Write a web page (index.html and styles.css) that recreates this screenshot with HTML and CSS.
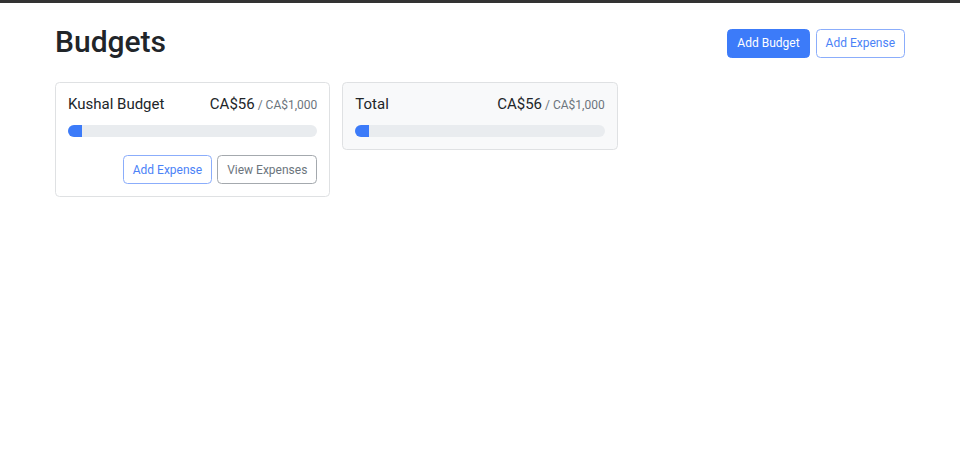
FILE: index.html
```html
<!DOCTYPE html>
<html lang="en">
<head>
<meta charset="utf-8">
<title>Budgets</title>
<link rel="stylesheet" href="styles.css">
</head>
<body>
<div class="topbar"></div>
<main class="container">
  <header class="header">
    <h1 class="title">Budgets</h1>
    <button class="btn btn-primary">Add Budget</button>
    <button class="btn btn-outline-primary">Add Expense</button>
  </header>
  <section class="grid">
    <div class="card">
      <div class="card-title">
        <div class="name">Kushal Budget</div>
        <div class="amount">CA$56<span class="max">/ CA$1,000</span></div>
      </div>
      <div class="progress"><div class="progress-bar" style="width:5.6%"></div></div>
      <div class="actions">
        <button class="btn btn-outline-primary">Add Expense</button>
        <button class="btn btn-outline-secondary">View Expenses</button>
      </div>
    </div>
    <div class="card card-light">
      <div class="card-title">
        <div class="name">Total</div>
        <div class="amount">CA$56<span class="max">/ CA$1,000</span></div>
      </div>
      <div class="progress"><div class="progress-bar" style="width:5.6%"></div></div>
    </div>
  </section>
</main>
</body>
</html>
```
FILE: styles.css
```css
* { box-sizing: border-box; }
html, body { margin: 0; padding: 0; background: #fff; }
body {
  font-family: Roboto, "Noto Sans", sans-serif;
  color: #212529;
  font-size: 12px;
  line-height: 1.5;
}
.topbar { height: 3px; background: #333; }
.container { padding: 19px 55px 0; }
.header {
  display: flex;
  align-items: center;
  gap: 6px;
  margin-bottom: 18px;
}
.title {
  margin: 0 auto 4px 0;
  padding-top: 2px;
  font-size: 30px;
  font-weight: 500;
  line-height: 36px;
}
.btn {
  font-family: inherit;
  font-size: 12px;
  line-height: 18px;
  padding: 4.5px 9px;
  border: 1px solid transparent;
  border-radius: 4.5px;
  background: transparent;
  cursor: pointer;
}
.btn-primary { background: #3c7bf9; border-color: #3c7bf9; color: #fff; }
.btn-outline-primary { border-color: #8badfb; color: #4b82f7; }
.btn-outline-secondary { border-color: #a4a9ae; color: #6c757d; }
.grid {
  display: grid;
  grid-template-columns: repeat(3, 1fr);
  gap: 12px;
  align-items: start;
}
.card {
  border: 1px solid #dfe1e3;
  border-radius: 4.5px;
  padding: 12px;
  background: #fff;
}
.card-light { background: #f8f9fa; }
.card-title {
  display: flex;
  justify-content: space-between;
  align-items: baseline;
  font-size: 15px;
  line-height: 17px;
  padding-top: 1px;
  height: 18px;
  margin-bottom: 12px;
}
.name { margin-right: 6px; }
.amount { display: flex; align-items: baseline; }
.max { font-size: 12px; line-height: 14px; color: #6c757d; margin-left: 3px; }
.progress {
  height: 12px;
  background: #e9ecef;
  border-radius: 6px;
  overflow: hidden;
  display: flex;
}
.progress-bar { background: #3c7bf9; height: 100%; }
.actions {
  display: flex;
  justify-content: flex-end;
  gap: 5px;
  margin-top: 18px;
}
.actions .btn:first-child { margin-right: 0; }
```
